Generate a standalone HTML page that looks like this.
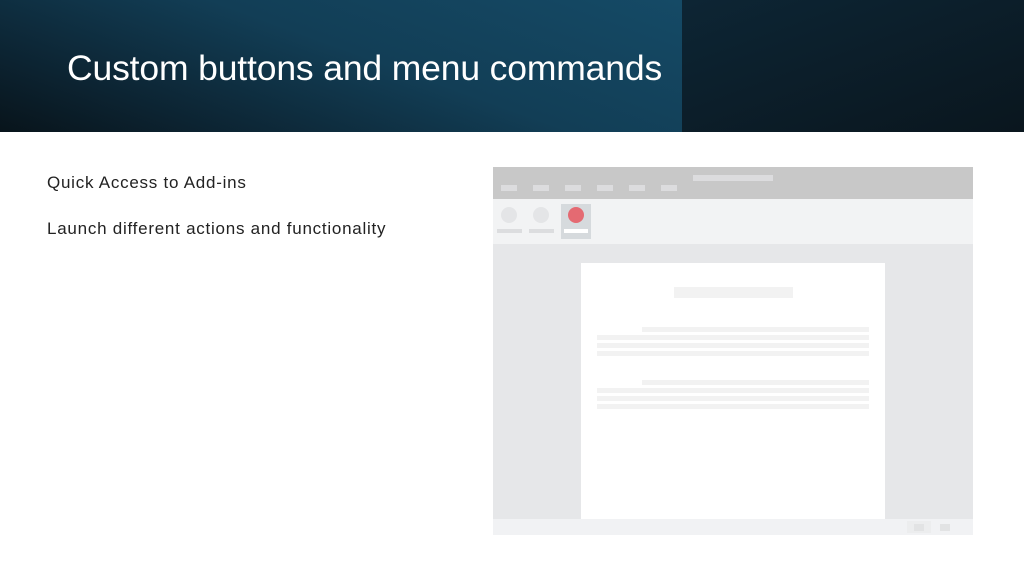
<!DOCTYPE html>
<html><head><meta charset="utf-8"><style>
*{margin:0;padding:0;box-sizing:border-box}
body{width:1024px;height:576px;overflow:hidden;background:#fff;font-family:"Liberation Sans",sans-serif;position:relative}
.a{position:absolute}
#hdr{left:0;top:0;width:1024px;height:132px;background:linear-gradient(160deg,#0f2c3e 0%,#0d2534 50%,#0a161e 100%)}
#hl{left:0;top:0;width:682px;height:132px;background:linear-gradient(200deg,#154a66 0%,#123e56 45%,#0c2331 80%,#08141b 100%)}
h1{position:absolute;left:67px;top:48px;font-weight:normal;font-size:35.5px;color:#fff;white-space:nowrap;letter-spacing:-0.15px}
.t{left:47px;font-size:17px;color:#222;white-space:nowrap;letter-spacing:0.75px}
</style></head><body>
<div id="hdr" class="a"></div>
<div id="hl" class="a"></div>
<h1>Custom buttons and menu commands</h1>
<div class="a t" style="top:173px">Quick Access to Add-ins</div>
<div class="a t" style="top:219px">Launch different actions and functionality</div>

<div class="a" style="left:493px;top:167px;width:480px;height:32px;background:#c8c8c8"></div>
<div class="a" style="left:693px;top:175px;width:80px;height:6px;background:#dcdcde"></div>
<div class="a" style="left:501px;top:185px;width:16px;height:6px;background:#dcdcde"></div>
<div class="a" style="left:533px;top:185px;width:16px;height:6px;background:#dcdcde"></div>
<div class="a" style="left:565px;top:185px;width:16px;height:6px;background:#dcdcde"></div>
<div class="a" style="left:597px;top:185px;width:16px;height:6px;background:#dcdcde"></div>
<div class="a" style="left:629px;top:185px;width:16px;height:6px;background:#dcdcde"></div>
<div class="a" style="left:661px;top:185px;width:16px;height:6px;background:#dcdcde"></div>

<div class="a" style="left:493px;top:199px;width:480px;height:45px;background:#f2f3f4"></div>
<div class="a" style="left:561px;top:204px;width:30px;height:35px;background:#d6dadd"></div>
<div class="a" style="left:501px;top:207px;width:16px;height:16px;border-radius:50%;background:#e4e5e7"></div>
<div class="a" style="left:533px;top:207px;width:16px;height:16px;border-radius:50%;background:#e4e5e7"></div>
<div class="a" style="left:568px;top:207px;width:16px;height:16px;border-radius:50%;background:#e46a72"></div>
<div class="a" style="left:497px;top:229px;width:25px;height:4px;background:#dcdddf"></div>
<div class="a" style="left:529px;top:229px;width:25px;height:4px;background:#dcdddf"></div>
<div class="a" style="left:564px;top:229px;width:24px;height:4px;background:#fff"></div>

<div class="a" style="left:493px;top:244px;width:480px;height:275px;background:#e6e7e9"></div>
<div class="a" style="left:581px;top:263px;width:304px;height:256px;background:#fff"></div>
<div class="a" style="left:674px;top:287px;width:119px;height:11px;background:#f2f2f2"></div>
<div class="a" style="left:642px;top:327px;width:227px;height:5px;background:#f2f2f2"></div>
<div class="a" style="left:597px;top:335px;width:272px;height:5px;background:#f2f2f2"></div>
<div class="a" style="left:597px;top:343px;width:272px;height:5px;background:#f2f2f2"></div>
<div class="a" style="left:597px;top:351px;width:272px;height:5px;background:#f2f2f2"></div>
<div class="a" style="left:642px;top:380px;width:227px;height:5px;background:#f2f2f2"></div>
<div class="a" style="left:597px;top:388px;width:272px;height:5px;background:#f2f2f2"></div>
<div class="a" style="left:597px;top:396px;width:272px;height:5px;background:#f2f2f2"></div>
<div class="a" style="left:597px;top:404px;width:272px;height:5px;background:#f2f2f2"></div>

<div class="a" style="left:493px;top:519px;width:480px;height:16px;background:#f1f2f4"></div>
<div class="a" style="left:907px;top:521px;width:24px;height:12px;background:#ecedee"></div>
<div class="a" style="left:914px;top:524px;width:10px;height:7px;background:#e2e3e4"></div>
<div class="a" style="left:940px;top:524px;width:10px;height:7px;background:#e2e3e4"></div>
</body></html>
